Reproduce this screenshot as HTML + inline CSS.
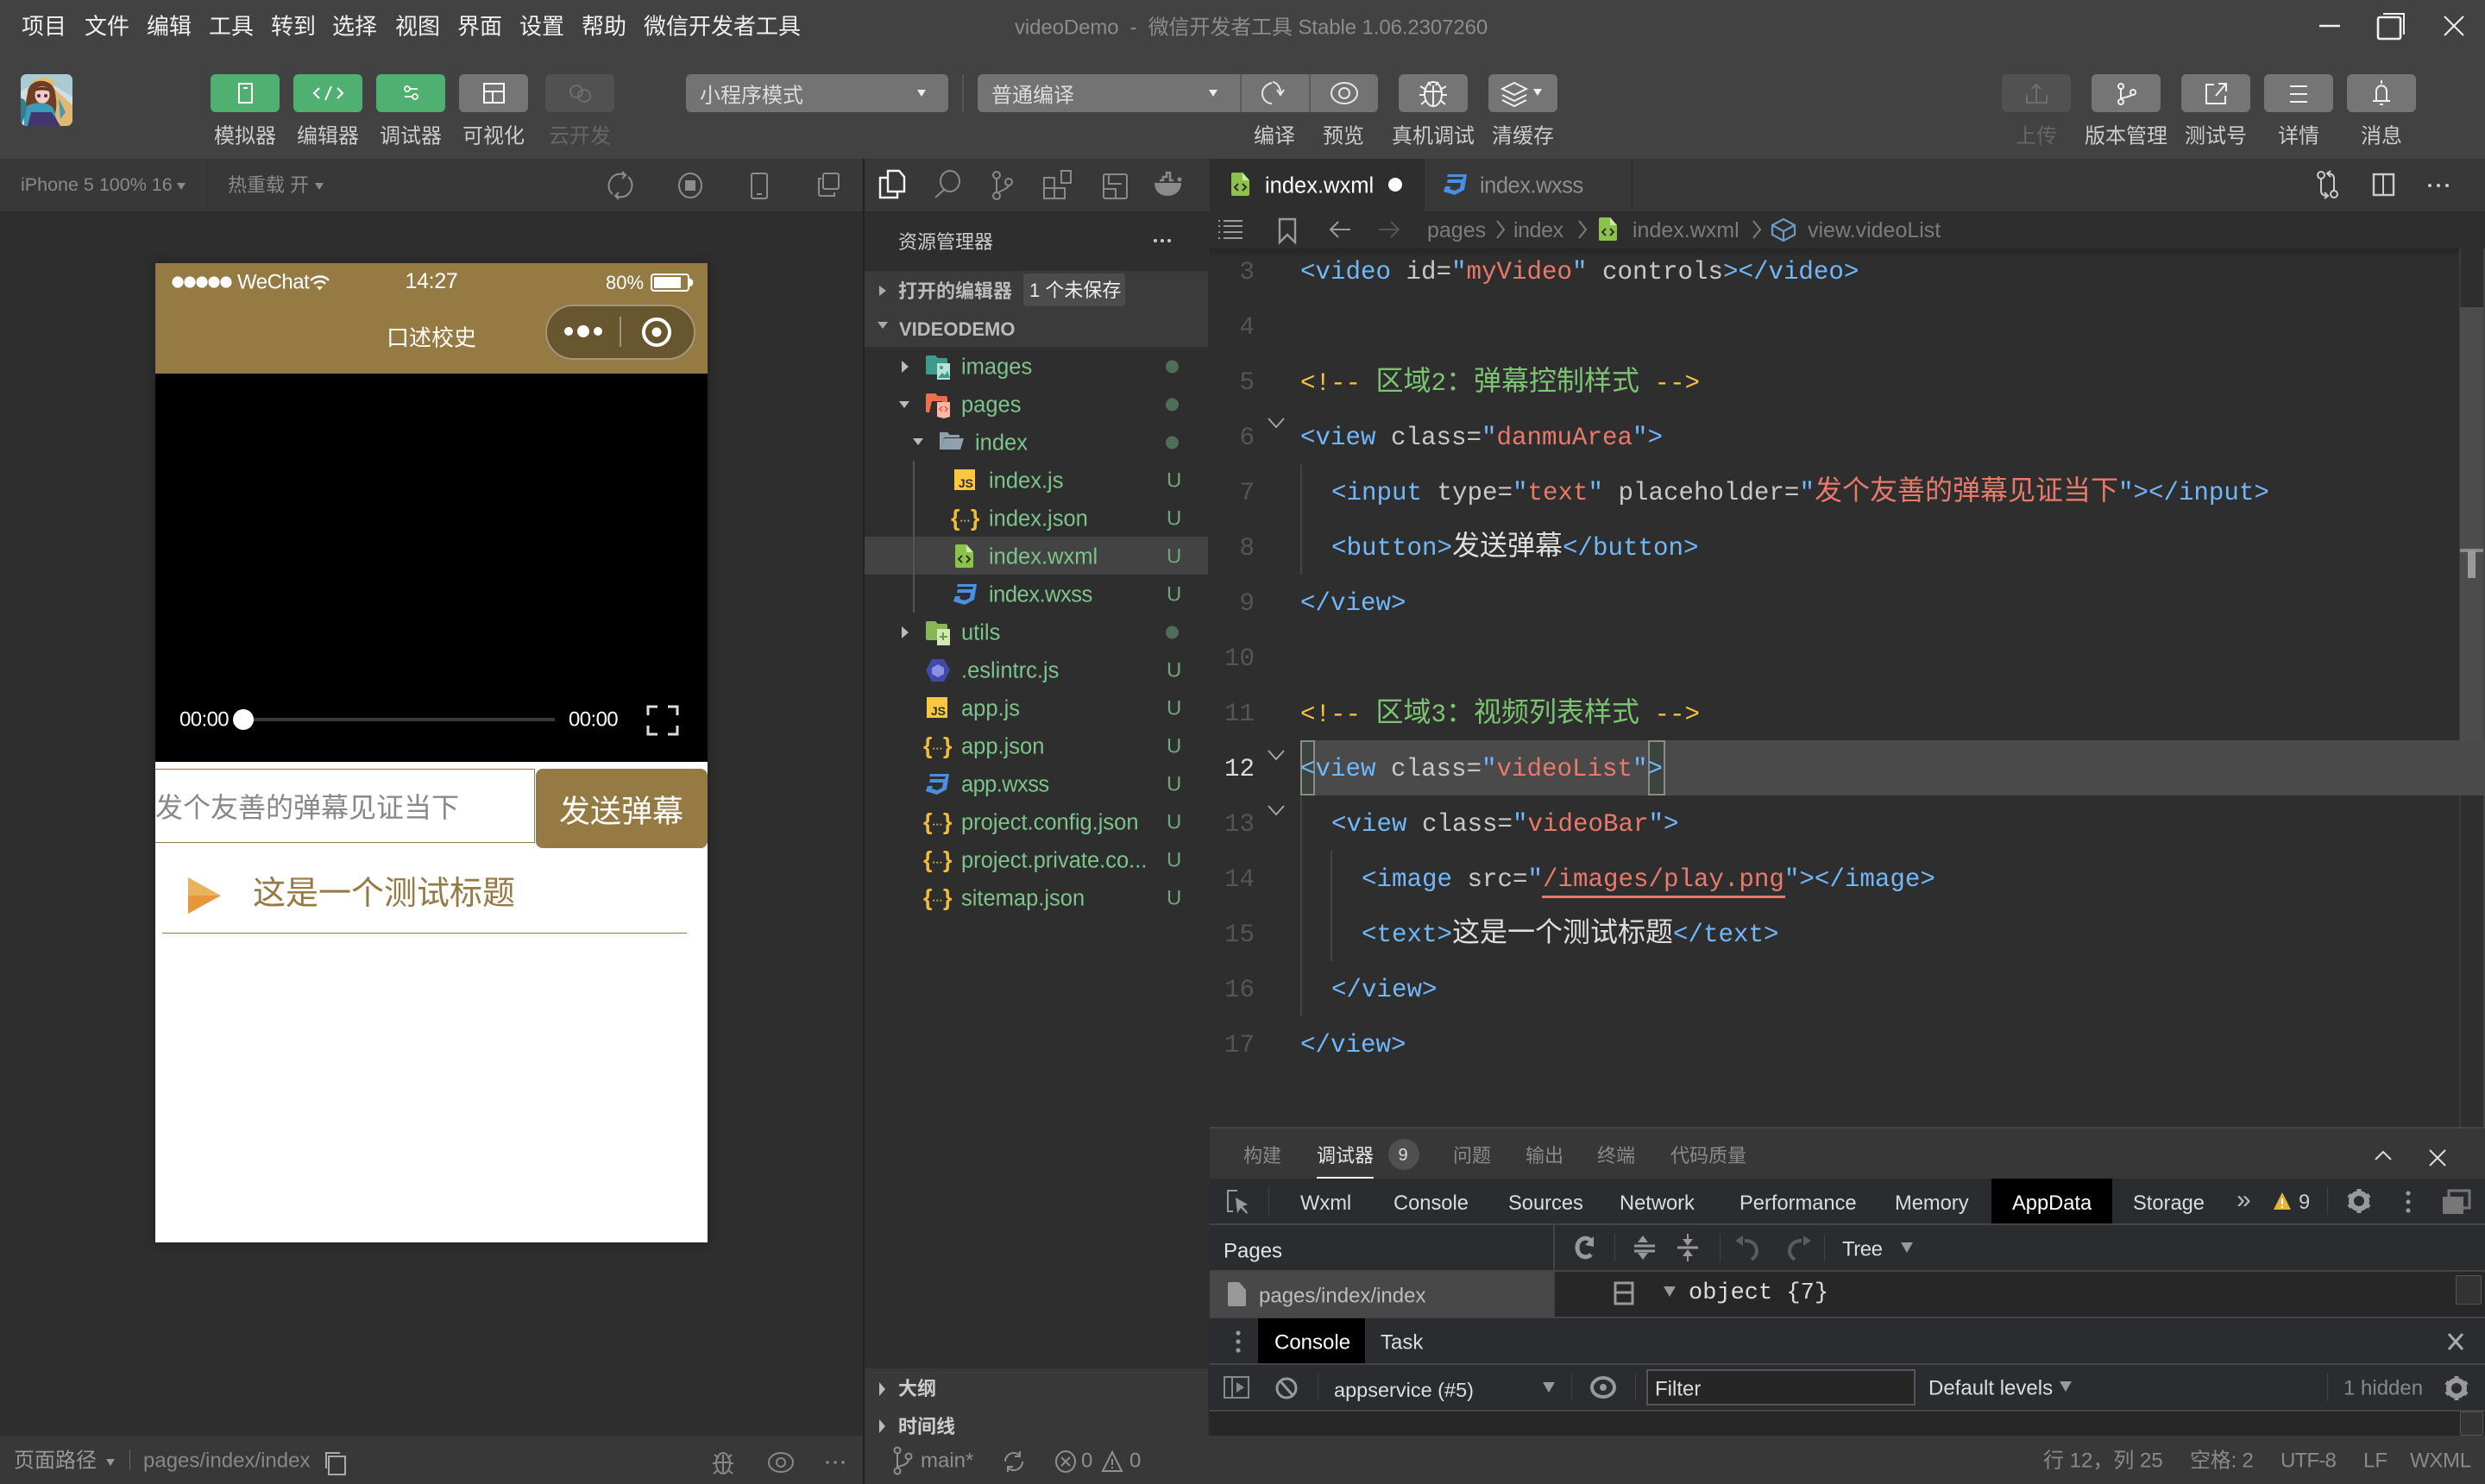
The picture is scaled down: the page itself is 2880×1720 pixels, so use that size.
<!DOCTYPE html>
<html lang="zh">
<head>
<meta charset="utf-8">
<title>videoDemo - 微信开发者工具</title>
<style>
html,body{margin:0;padding:0;width:2880px;height:1720px;overflow:hidden;background:#2e2e2e}
body{position:relative;font-family:"Liberation Sans","Noto Sans CJK SC",sans-serif;color:#ccc}
.a{position:absolute}
.t{position:absolute;white-space:nowrap;transform:translateY(calc(-50% + 2px));line-height:1.2}
.tc{position:absolute;white-space:nowrap;transform:translate(-50%,-50%);line-height:1.2}
svg{position:absolute;overflow:visible;fill:none}
.b{position:absolute;top:86px;width:80px;height:44px;border-radius:6px;background:#757575}
.g{background:#4fb072}
.d{background:#515151}
.lab{position:absolute;top:159px;transform:translate(-50%,-50%);font-size:24px;color:#ccc;white-space:nowrap;line-height:1.2}
.m{position:absolute;top:31px;transform:translateY(-50%);font-size:26px;color:#f0f0f0;white-space:nowrap;line-height:1.2}
.c{position:absolute;font-family:"Liberation Mono","Noto Sans CJK SC",monospace;font-size:29.17px;line-height:64px;height:64px;white-space:pre;color:#c8c8c8;transform:translateY(2px)}
.c i{font-style:normal;font-family:"Noto Sans CJK SC",sans-serif;font-size:32px;line-height:0}
.n{position:absolute;left:1394px;width:60px;text-align:right;font-family:"Liberation Mono",monospace;font-size:29.17px;line-height:64px;color:#555;transform:translateY(2px)}
.k{color:#70b8fa}.s{color:#e9796b}.y{color:#f5c542}.v{color:#7cc474}.w{color:#dedede}
.f{position:absolute;white-space:nowrap;transform:translateY(calc(-50% + 2px));font-size:25.5px;color:#7cc48b;line-height:1.2}
.u{position:absolute;left:1352px;transform:translateY(calc(-50% + 2px));font-size:24px;color:#6fa57c;line-height:1.2}
.dot{position:absolute;left:1351px;width:15px;height:15px;border-radius:50%;background:#4f6d58;transform:translateY(calc(-50% + 1px))}
.dt{position:absolute;font-size:23.7px;color:#dcdcdc;top:1395px;transform:translateY(-50%);white-space:nowrap;line-height:1.2}
.pt{position:absolute;font-size:22px;color:#8a8a8a;top:1340px;transform:translateY(-50%);white-space:nowrap;line-height:1.2}
.st{position:absolute;font-size:24px;color:#8a8a8a;top:1694px;transform:translateY(-50%);white-space:nowrap;line-height:1.2}
.br{position:absolute;top:267px;transform:translateY(-50%);font-size:25px;color:#7c7c7c;white-space:nowrap;line-height:1.2}
.js{position:absolute;width:24px;height:24px;background:#fbc740;color:#2e2e2e;font:bold 14px/14px "Liberation Sans",sans-serif;text-align:right;padding:9px 2px 0 0;box-sizing:border-box}
.jn{position:absolute;font:bold 27px/1 "Liberation Sans",sans-serif;color:#f2bb3a;transform:translateY(-50%);white-space:nowrap}
.jn b{font-size:12px;letter-spacing:.8px;position:relative;top:-5px}
</style>
</head>
<body>

<!-- header -->
<div class="a" style="left:0;top:0;width:2880px;height:184px;background:#424242"></div>
<div class="m" style="left:25px">项目</div>
<div class="m" style="left:98px">文件</div>
<div class="m" style="left:170px">编辑</div>
<div class="m" style="left:242px">工具</div>
<div class="m" style="left:314px">转到</div>
<div class="m" style="left:385px">选择</div>
<div class="m" style="left:458px">视图</div>
<div class="m" style="left:530px">界面</div>
<div class="m" style="left:602px">设置</div>
<div class="m" style="left:674px">帮助</div>
<div class="m" style="left:746px">微信开发者工具</div>
<div class="t" style="left:1176px;top:31px;font-size:24px;color:#8c8c8c;letter-spacing:-.1px">videoDemo&nbsp; - &nbsp;微信开发者工具 Stable 1.06.2307260</div>

<!-- window controls -->
<svg style="left:0;top:0" width="2880" height="60" stroke="#f0f0f0" stroke-width="2.4">
<path d="M2688 30h24"/>
<rect x="2756" y="20" width="26" height="25" rx="2" stroke-width="2.6"/>
<path d="M2762 16h24v24" stroke-width="2"/>
<path d="M2833 19l22 22M2855 19l-22 22" stroke-width="2"/>
</svg>

<!-- avatar -->
<svg style="left:24px;top:86px;border-radius:6px" width="60" height="60" viewBox="0 0 60 60">
<clipPath id="av"><rect width="60" height="60" rx="7"/></clipPath>
<g clip-path="url(#av)">
<rect width="60" height="60" fill="#cfe0e0"/>
<path d="M0 0h60v26L40 14 20 8 0 20z" fill="#a9ccd4"/>
<path d="M14 8c8-6 20-6 26 2l-6 6H18z" fill="#e3bd6a"/>
<path d="M38 16l22 20v24H36z" fill="#dfb874"/>
<path d="M8 22C8 4 38 2 40 22c2 12 2 20-2 28H10C4 40 6 30 8 22z" fill="#6e3f26"/>
<ellipse cx="25" cy="24" rx="8.500" ry="10" fill="#f0cdbd"/>
<path d="M16 20c3-7 15-7 18 0-5-2-13-2-18 0z" fill="#5f3520"/>
<circle cx="21" cy="25" r="2" fill="#4b2a50"/><circle cx="29" cy="25" r="2" fill="#4b2a50"/>
<path d="M4 60V40c6-8 28-10 34 0l6 20z" fill="#3f9ab8"/>
<path d="M12 44h24l10 16H8z" fill="#43366f"/>
<path d="M0 28c6 0 8 8 6 18L0 60z" fill="#2e7f92"/>
<path d="M44 28l8 16-6 8z" fill="#4a98b0"/>
</g>
</svg>

<!-- left toolbar buttons -->
<div class="b g" style="left:244px"><svg width="80" height="44" stroke="#fff" stroke-width="2"><rect x="33" y="11" width="15" height="22"/><path d="M38 16h5"/></svg></div>
<div class="b g" style="left:340px"><svg width="80" height="44" stroke="#fff" stroke-width="2"><path d="M30 16l-6 6 6 6M51 16l6 6-6 6M44 14l-7 16"/></svg></div>
<div class="b g" style="left:436px"><svg width="80" height="44" stroke="#fff" stroke-width="1.8"><circle cx="36" cy="17" r="3"/><path d="M39 17h9M33 26h9"/><circle cx="45" cy="26" r="3"/></svg></div>
<div class="b" style="left:532px"><svg width="80" height="44" stroke="#fff" stroke-width="2"><rect x="29" y="11" width="23" height="22"/><path d="M29 20h23M39 20v13"/></svg></div>
<div class="b d" style="left:632px"><svg width="80" height="44" stroke="#6e6e6e" stroke-width="2"><circle cx="36" cy="20" r="7"/><circle cx="45" cy="25" r="7"/></svg></div>
<div class="lab" style="left:284px">模拟器</div>
<div class="lab" style="left:380px">编辑器</div>
<div class="lab" style="left:476px">调试器</div>
<div class="lab" style="left:572px">可视化</div>
<div class="lab" style="left:672px;color:#666">云开发</div>

<!-- mode dropdowns -->
<div class="a" style="left:795px;top:86px;width:304px;height:44px;background:#737373;border-radius:6px"></div>
<div class="t" style="left:811px;top:110px;font-size:24px;color:#ddd">小程序模式</div>
<svg style="left:1062px;top:103px" width="12" height="10"><path d="M1 1h10L6 9z" fill="#eee"/></svg>
<div class="a" style="left:1115px;top:86px;width:2px;height:44px;background:#555"></div>
<div class="a" style="left:1133px;top:86px;width:464px;height:44px;background:#737373;border-radius:6px"></div>
<div class="a" style="left:1437px;top:86px;width:2px;height:44px;background:#5c5c5c"></div>
<div class="a" style="left:1517px;top:86px;width:2px;height:44px;background:#5c5c5c"></div>
<div class="t" style="left:1149px;top:110px;font-size:24px;color:#ddd">普通编译</div>
<svg style="left:1400px;top:103px" width="12" height="10"><path d="M1 1h10L6 9z" fill="#eee"/></svg>
<svg style="left:1450px;top:90px" width="60" height="36" stroke="#e6e6e6" stroke-width="2"><path d="M24 6c-7 2-11 7-11 12 0 7 5 12 11 12"/><path d="M25 5c6 1 9 7 9 13M30 14l4 6 4-6"/></svg>
<svg style="left:1530px;top:90px" width="60" height="36" stroke="#e6e6e6" stroke-width="2"><ellipse cx="28" cy="18" rx="15" ry="12"/><circle cx="28" cy="18" r="6"/></svg>
<div class="b" style="left:1621px"><svg width="80" height="44" stroke="#f0f0f0" stroke-width="2"><ellipse cx="40" cy="23" rx="10" ry="14"/><path d="M31 20h18M40 13v24M34 9l3 4M46 9l-3 4M25 14l7 4M55 14l-7 4M24 24h7M56 24h-7M26 35l6-5M54 35l-6-5"/></svg></div>
<div class="b" style="left:1725px"><svg width="80" height="44" stroke="#f0f0f0" stroke-width="2"><path d="M16 17l14-7 14 7-14 7zM16 24l14 7 14-7M16 30l14 7 14-7"/><path d="M52 17h10l-5 8z" fill="#f0f0f0" stroke="none"/></svg></div>
<div class="lab" style="left:1477px">编译</div>
<div class="lab" style="left:1557px">预览</div>
<div class="lab" style="left:1661px">真机调试</div>
<div class="lab" style="left:1765px">清缓存</div>

<!-- right toolbar -->
<div class="b d" style="left:2320px"><svg width="80" height="44" stroke="#6e6e6e" stroke-width="2"><path d="M40 12v21M35 17l5-5 5 5M29 24v9h23v-9"/></svg></div>
<div class="b" style="left:2424px"><svg width="80" height="44" stroke="#f0f0f0" stroke-width="2"><circle cx="34" cy="14" r="3"/><circle cx="34" cy="32" r="3"/><circle cx="48" cy="21" r="3"/><path d="M34 17v12M35 28c6-2 11-2 12-5"/></svg></div>
<div class="b" style="left:2528px"><svg width="80" height="44" stroke="#f0f0f0" stroke-width="2"><path d="M38 12h-9v22h22v-9M40 25l11-13M43 11h9v9"/></svg></div>
<div class="b" style="left:2624px"><svg width="80" height="44" stroke="#f0f0f0" stroke-width="2"><path d="M30 14h20M30 23h20M30 32h20"/></svg></div>
<div class="b" style="left:2720px"><svg width="80" height="44" stroke="#f0f0f0" stroke-width="2"><path d="M34 30V20c0-9 12-9 12 0v10M30 31h20M40 7v4M38 35h4"/></svg></div>
<div class="lab" style="left:2360px;color:#666">上传</div>
<div class="lab" style="left:2464px">版本管理</div>
<div class="lab" style="left:2568px">测试号</div>
<div class="lab" style="left:2664px">详情</div>
<div class="lab" style="left:2760px">消息</div>

<!-- secondary bar -->
<div class="a" style="left:0;top:184px;width:2880px;height:61px;background:#383838"></div>
<div class="a" style="left:240px;top:184px;width:1px;height:61px;background:#333"></div>
<div class="a" style="left:398px;top:184px;width:1px;height:61px;background:#333"></div>
<div class="t" style="left:24px;top:213px;font-size:21.5px;color:#8a8a8a">iPhone 5 100% 16</div>
<svg style="left:204px;top:211px" width="12" height="10"><path d="M1 1h10L6 9z" fill="#8a8a8a"/></svg>
<div class="t" style="left:264px;top:213px;font-size:22px;color:#8a8a8a">热重载 开</div>
<svg style="left:364px;top:211px" width="12" height="10"><path d="M1 1h10L6 9z" fill="#8a8a8a"/></svg>
<svg style="left:700px;top:197px" width="280" height="36" stroke="#8c8c8c" stroke-width="2">
<path d="M10 28c-6-5-6-14 0-20 4-4 10-4 14-2M28 8c6 5 6 14 0 20-4 4-10 4-14 2M21 2l4 4-4 4M17 34l-4-4 4-4"/>
<ellipse cx="100" cy="18" rx="13" ry="14"/><rect x="94" y="12" width="12" height="12" fill="#8c8c8c" stroke="none"/>
<rect x="171" y="4" width="18" height="29" rx="2"/><path d="M177 28h6"/>
<rect x="254" y="4" width="18" height="18" rx="2"/><path d="M252 10h-3v18a2 2 0 0 0 2 2h16v-4"/>
</svg>

<!-- simulator -->
<div class="a" style="left:0;top:245px;width:1000px;height:1419px;background:#2e2e2e"></div>
<div class="a" style="left:180px;top:305px;width:640px;height:1135px;background:#fff;box-shadow:0 0 12px rgba(0,0,0,.35)"></div>
<div class="a" style="left:180px;top:305px;width:640px;height:128px;background:#957a44"></div>
<svg style="left:198px;top:320px" width="72" height="14"><circle cx="8" cy="7" r="6.600" fill="#fff"/><circle cx="22" cy="7" r="6.600" fill="#fff"/><circle cx="36" cy="7" r="6.600" fill="#fff"/><circle cx="50" cy="7" r="6.600" fill="#fff"/><circle cx="64" cy="7" r="6.600" fill="#fff"/></svg>
<div class="t" style="left:275px;top:326px;font-size:24px;color:#fff;letter-spacing:-.5px">WeChat</div>
<svg style="left:358px;top:318px" width="24" height="20" stroke="#fff" stroke-width="2.4"><path d="M2 7c6-6 16-6 21 0M6 11c4-4 10-4 13 0"/><path d="M9 14h7l-3.500 4.500z" fill="#fff" stroke="none"/></svg>
<div class="tc" style="left:500px;top:326px;font-size:25px;color:#fff;letter-spacing:-.3px">14:27</div>
<div class="t" style="left:702px;top:326px;font-size:22px;color:#fff">80%</div>
<svg style="left:754px;top:317px" width="50" height="22" stroke="#fff" stroke-width="2"><rect x="1" y="1" width="43" height="19" rx="3"/><rect x="4" y="4" width="31" height="13" fill="#fff" stroke="none"/><path d="M46 7c3 1 3 6 0 7z" fill="#fff"/></svg>
<div class="tc" style="left:500px;top:392px;font-size:26px;color:#fff">口述校史</div>
<div class="a" style="left:632px;top:353px;width:174px;height:64px;box-sizing:border-box;border-radius:32px;background:#68562f;border:2px solid #a4967a"></div>
<svg style="left:632px;top:353px" width="174" height="64"><ellipse cx="27" cy="31" rx="5" ry="5" fill="#fff"/><ellipse cx="44" cy="31" rx="7" ry="7" fill="#fff"/><ellipse cx="61" cy="31" rx="5" ry="5" fill="#fff"/><path d="M87 14v35" stroke="#9e927a" stroke-width="2"/><circle cx="129" cy="32" r="15" stroke="#fff" stroke-width="4"/><circle cx="129" cy="32" r="5.500" fill="#fff"/></svg>

<div class="a" style="left:180px;top:433px;width:640px;height:450px;background:#000"></div>
<div class="t" style="left:208px;top:833px;font-size:24px;color:#fff;letter-spacing:-.6px">00:00</div>
<div class="a" style="left:282px;top:832px;width:361px;height:4px;background:#3a3a3a"></div>
<div class="a" style="left:270px;top:822px;width:24px;height:24px;border-radius:50%;background:#fff"></div>
<div class="t" style="left:659px;top:833px;font-size:24px;color:#fff;letter-spacing:-.6px">00:00</div>
<svg style="left:750px;top:817px" width="36" height="36" stroke="#ddd" stroke-width="3"><path d="M1 12V2h11M24 2h11v10M1 24v10h11M24 34h11V24"/></svg>

<div class="a" style="left:180px;top:891px;width:440px;height:86px;box-sizing:border-box;border:1px solid #957a44;border-left:0;background:#fff"></div>
<div class="t" style="left:180px;top:934px;font-size:32px;color:#888">发个友善的弹幕见证当下</div>
<div class="a" style="left:621px;top:891px;width:199px;height:92px;background:#957a44;border-radius:8px"></div>
<div class="tc" style="left:720px;top:940px;font-size:36px;color:#fff">发送弹幕</div>
<svg style="left:216px;top:1015px" width="42" height="46"><path d="M2 2L40 23H2z" fill="#eab25c"/><path d="M2 23h38L2 44z" fill="#e8963e"/></svg>
<div class="t" style="left:293px;top:1035px;font-size:38px;color:#957a44">这是一个测试标题</div>
<div class="a" style="left:188px;top:1081px;width:608px;height:1px;background:#957a44"></div>

<!-- sidebar -->
<div class="a" style="left:1000px;top:184px;width:2px;height:1536px;background:#222"></div>
<div class="a" style="left:1002px;top:245px;width:398px;height:1419px;background:#2e2e2e"></div>
<svg style="left:1002px;top:190px" width="400" height="50" stroke="#8a8a8a" stroke-width="2">
<g stroke="#f4f4f4" stroke-width="2.400"><path d="M27 8h13l6 7v17H27z"/><path d="M27 16h-9v23h20v-7"/></g>
<ellipse cx="99" cy="20" rx="11" ry="12"/><path d="M92 30L82 39"/>
<circle cx="153" cy="13" r="4"/><circle cx="153" cy="37" r="4"/><circle cx="167" cy="21" r="4"/><path d="M153 17v16M155 33c6-3 11-5 12-8"/>
<path d="M208 16h12v12h-12zM208 28v12h12V28M220 28h12v12h-12"/><rect x="228" y="8" width="11" height="14"/>
<rect x="277" y="12" width="27" height="28" rx="2"/><path d="M283 12v11h15M277 29h14v11"/>
<path d="M336 22h31c0 9-7 15-16 15s-15-6-15-15z" fill="#8a8a8a" stroke="none"/><path d="M342 19h4v-4h4v-5h4v9h4" stroke-width="2.500"/><circle cx="365" cy="18" r="2.500" fill="#8a8a8a" stroke="none"/>
</svg>
<div class="t" style="left:1041px;top:279px;font-size:22px;color:#ccc">资源管理器</div>
<svg style="left:1336px;top:276px" width="24" height="6"><circle cx="3" cy="3" r="2" fill="#ccc"/><circle cx="11" cy="3" r="2" fill="#ccc"/><circle cx="19" cy="3" r="2" fill="#ccc"/></svg>

<div class="a" style="left:1002px;top:314px;width:398px;height:88px;background:#3b3b3b"></div>
<svg style="left:1016px;top:329px" width="50" height="60"><path d="M3 2l8 6-8 6z" fill="#aaa"/><path d="M1 44h12l-6 8z" fill="#aaa"/></svg>
<div class="t" style="left:1041px;top:336px;font-size:22px;font-weight:bold;color:#bbb">打开的编辑器</div>
<div class="a" style="left:1186px;top:317px;width:118px;height:38px;background:#4c4c4c;border-radius:4px"></div>
<div class="t" style="left:1193px;top:335px;font-size:22px;color:#eee">1 个未保存</div>
<div class="t" style="left:1042px;top:380px;font-size:22px;font-weight:bold;color:#bbb">VIDEODEMO</div>

<div class="a" style="left:1002px;top:622px;width:398px;height:44px;background:#434343"></div>
<div class="a" style="left:1058px;top:534px;width:2px;height:176px;background:#555"></div>

<!-- tree arrows -->
<svg style="left:1040px;top:410px" width="40" height="340">
<path d="M5 8l8 7-8 7z" fill="#bbb"/>
<path d="M2 55h12l-6 8z" fill="#bbb"/>
<path d="M18 98h12l-6 8z" fill="#bbb"/>
<path d="M5 316l8 7-8 7z" fill="#bbb"/>
</svg>

<!-- folder icons -->
<svg style="left:1072px;top:410px" width="34" height="32"><path d="M1 4a2 2 0 0 1 2-2h9l3 3h9a2 2 0 0 1 2 2v17H3a2 2 0 0 1-2-2z" fill="#3e9a8a"/><rect x="14" y="11" width="15" height="19" fill="#b7e3d7"/><circle cx="19" cy="16" r="2" fill="#3e9a8a"/><path d="M15 28l5-6 3 3 3-5 3 8z" fill="#3e9a8a"/></svg>
<svg style="left:1072px;top:454px" width="34" height="32"><path d="M1 4a2 2 0 0 1 2-2h9l3 3h9a2 2 0 0 1 2 2v17H3a2 2 0 0 1-2-2z" fill="#e9704a"/><path d="M5 24l3-13h12v13z" fill="#3a2c28"/><path d="M14 12h15v17l-7 2-8-2z" fill="#f9b8a4"/><path d="M20 17l-3 3 3 3M23 17l3 3-3 3" stroke="#e9504a" stroke-width="1.500"/></svg>
<svg style="left:1088px;top:498px" width="30" height="30"><path d="M1 3h9l3 3h11v3H6L3 23H1z" fill="#8fa1ae"/><path d="M6 10h23l-4 13H3z" fill="#8fa1ae"/></svg>
<svg style="left:1072px;top:718px" width="34" height="32"><path d="M1 4a2 2 0 0 1 2-2h9l3 3h9a2 2 0 0 1 2 2v17H3a2 2 0 0 1-2-2z" fill="#8ab554"/><rect x="14" y="11" width="15" height="19" fill="#d3e8b4"/><path d="M21 15v9M17 20h9" stroke="#6a9a3a" stroke-width="2"/></svg>
<svg style="left:1072px;top:763px" width="30" height="28"><path d="M8 1h14l7 13-7 13H8L1 14z" fill="#4249a8"/><path d="M15 7l7 4v7l-7 4-7-4v-7z" fill="#8a90e8"/></svg>

<!-- file icons -->
<div class="js" style="left:1106px;top:544px">JS</div>
<div class="js" style="left:1074px;top:808px">JS</div>
<div class="jn" style="left:1102px;top:601px">{<b>...</b>}</div>
<div class="jn" style="left:1070px;top:865px">{<b>...</b>}</div>
<div class="jn" style="left:1070px;top:953px">{<b>...</b>}</div>
<div class="jn" style="left:1070px;top:997px">{<b>...</b>}</div>
<div class="jn" style="left:1070px;top:1041px">{<b>...</b>}</div>
<svg style="left:1107px;top:631px" width="22" height="27"><path d="M2 0h11l8 9v16a2 2 0 0 1-2 2H2a2 2 0 0 1-2-2V2a2 2 0 0 1 2-2z" fill="#8bc34a"/><path d="M13 0l8 9h-8z" fill="#cfe8a8"/><path d="M8 13l-4 4 4 4M13 13l4 4-4 4" stroke="#2e2e2e" stroke-width="2"/></svg>
<svg style="left:1105px;top:676px" width="27" height="26"><path d="M5 1h22l-3 18-11 6-13-4 2-6h6l-1 3 6 2 6-3 1-6H4l1-4h17l1-3H4z" fill="#4a90e2"/></svg>
<svg style="left:1073px;top:896px" width="27" height="26"><path d="M5 1h22l-3 18-11 6-13-4 2-6h6l-1 3 6 2 6-3 1-6H4l1-4h17l1-3H4z" fill="#4a90e2"/></svg>

<!-- file labels -->
<div class="f" style="left:1114px;top:424px">images</div>
<div class="f" style="left:1114px;top:468px">pages</div>
<div class="f" style="left:1130px;top:512px">index</div>
<div class="f" style="left:1146px;top:556px">index.js</div>
<div class="f" style="left:1146px;top:600px">index.json</div>
<div class="f" style="left:1146px;top:644px">index.wxml</div>
<div class="f" style="left:1146px;top:688px;letter-spacing:-.5px">index.wxss</div>
<div class="f" style="left:1114px;top:732px">utils</div>
<div class="f" style="left:1114px;top:776px">.eslintrc.js</div>
<div class="f" style="left:1114px;top:820px">app.js</div>
<div class="f" style="left:1114px;top:864px">app.json</div>
<div class="f" style="left:1114px;top:908px;letter-spacing:-.6px">app.wxss</div>
<div class="f" style="left:1114px;top:952px">project.config.json</div>
<div class="f" style="left:1114px;top:996px">project.private.co...</div>
<div class="f" style="left:1114px;top:1040px">sitemap.json</div>
<div class="dot" style="top:424px"></div>
<div class="dot" style="top:468px"></div>
<div class="dot" style="top:512px"></div>
<div class="dot" style="top:732px"></div>
<div class="u" style="top:556px">U</div><div class="u" style="top:600px">U</div><div class="u" style="top:644px">U</div><div class="u" style="top:688px">U</div>
<div class="u" style="top:776px">U</div><div class="u" style="top:820px">U</div><div class="u" style="top:864px">U</div><div class="u" style="top:908px">U</div>
<div class="u" style="top:952px">U</div><div class="u" style="top:996px">U</div><div class="u" style="top:1040px">U</div>

<div class="a" style="left:1002px;top:1586px;width:398px;height:78px;background:#393939"></div>
<svg style="left:1016px;top:1600px" width="14" height="64"><path d="M3 2l7 8-7 8z" fill="#bbb"/><path d="M3 45l7 8-7 8z" fill="#bbb"/></svg>
<div class="t" style="left:1041px;top:1608px;font-size:22px;font-weight:bold;color:#ccc">大纲</div>
<div class="t" style="left:1041px;top:1652px;font-size:22px;font-weight:bold;color:#ccc">时间线</div>

<!-- editor tabs -->
<div class="a" style="left:1402px;top:184px;width:248px;height:61px;background:#2e2e2e"></div>
<div class="a" style="left:1650px;top:184px;width:1px;height:61px;background:#2a2a2a"></div>
<div class="a" style="left:1891px;top:184px;width:1px;height:61px;background:#2a2a2a"></div>
<svg style="left:1427px;top:200px" width="22" height="27"><path d="M2 0h11l8 9v16a2 2 0 0 1-2 2H2a2 2 0 0 1-2-2V2a2 2 0 0 1 2-2z" fill="#8bc34a"/><path d="M13 0l8 9h-8z" fill="#cfe8a8"/><path d="M8 13l-4 4 4 4M13 13l4 4-4 4" stroke="#2e2e2e" stroke-width="2"/></svg>
<div class="t" style="left:1466px;top:214px;font-size:25.5px;color:#fff">index.wxml</div>
<div class="a" style="left:1609px;top:206px;width:16px;height:16px;border-radius:50%;background:#fff"></div>
<svg style="left:1673px;top:201px" width="27" height="26"><path d="M5 1h22l-3 18-11 6-13-4 2-6h6l-1 3 6 2 6-3 1-6H4l1-4h17l1-3H4z" fill="#4a90e2"/></svg>
<div class="t" style="left:1715px;top:214px;font-size:25.5px;color:#8f8f8f;letter-spacing:-.5px">index.wxss</div>
<svg style="left:2670px;top:196px" width="190" height="36" stroke="#ccc" stroke-width="2">
<circle cx="20" cy="7" r="4"/><circle cx="35" cy="29" r="4"/><path d="M20 11v14c0 5 4 6 8 6M35 25V11c0-5-4-6-8-6M31 2l-4 3 4 4M24 27l4 4-4 3"/>
<rect x="81" y="6" width="23" height="24" stroke-width="2.400"/><path d="M92 6v24"/>
<circle cx="146" cy="19" r="2" fill="#ccc" stroke="none"/><circle cx="156" cy="19" r="2" fill="#ccc" stroke="none"/><circle cx="166" cy="19" r="2" fill="#ccc" stroke="none"/>
</svg>

<!-- breadcrumb -->
<div class="a" style="left:1402px;top:245px;width:1478px;height:43px;background:#2e2e2e"></div>
<svg style="left:1410px;top:250px" width="240" height="36" stroke="#9a9a9a" stroke-width="2">
<path d="M8 6h22M8 12h22M8 19h22M8 26h22M2 6h2M2 12h2M2 19h2M2 26h2"/>
<path d="M73 4h18v27l-9-9-9 9z" stroke-width="2.400"/>
<path d="M155 16h-22M141 7l-9 9 9 9"/>
<path d="M188 16h22M202 7l9 9-9 9" stroke="#555"/>
</svg>
<div class="br" style="left:1654px">pages</div>
<svg style="left:1733px;top:254px" width="12" height="24" stroke="#7c7c7c" stroke-width="2"><path d="M2 2l8 10-8 10"/></svg>
<div class="br" style="left:1754px;letter-spacing:-.4px">index</div>
<svg style="left:1828px;top:254px" width="12" height="24" stroke="#7c7c7c" stroke-width="2"><path d="M2 2l8 10-8 10"/></svg>
<svg style="left:1853px;top:252px" width="22" height="27"><path d="M2 0h11l8 9v16a2 2 0 0 1-2 2H2a2 2 0 0 1-2-2V2a2 2 0 0 1 2-2z" fill="#8bc34a"/><path d="M13 0l8 9h-8z" fill="#cfe8a8"/><path d="M8 13l-4 4 4 4M13 13l4 4-4 4" stroke="#2e2e2e" stroke-width="2"/></svg>
<div class="br" style="left:1892px">index.wxml</div>
<svg style="left:2030px;top:254px" width="12" height="24" stroke="#7c7c7c" stroke-width="2"><path d="M2 2l8 10-8 10"/></svg>
<svg style="left:2052px;top:252px" width="30" height="28" stroke="#6a9cc9" stroke-width="2.200"><path d="M15 2l13 7v11l-13 7-13-7V9zM2 9l13 7 13-7M15 16v11"/></svg>
<div class="br" style="left:2095px">view.videoList</div>
<div class="a" style="left:1402px;top:288px;width:1448px;height:10px;background:linear-gradient(#242424,#2e2e2e)"></div>

<!-- scrollbar -->
<div class="a" style="left:2850px;top:288px;width:28px;height:1018px;background:#2e2e2e;border-left:2px solid #3c3c3c;box-sizing:border-box"></div>
<div class="a" style="left:2851px;top:356px;width:29px;height:506px;background:#4c4c4c"></div>
<div class="a" style="left:2878px;top:288px;width:2px;height:1018px;background:#444"></div>
<div class="a" style="left:2851px;top:636px;width:27px;height:4px;background:#8a8a8a"></div>
<div class="a" style="left:2860px;top:638px;width:9px;height:32px;background:#999"></div>

<!-- editor -->
<div class="a" style="left:1507px;top:858px;width:1373px;height:64px;background:#4a4a4a"></div>
<div class="a" style="left:1507px;top:858px;width:17px;height:64px;box-sizing:border-box;border:2px solid #8a8a8a;background:#3c443e"></div>
<div class="a" style="left:1910px;top:858px;width:20px;height:64px;box-sizing:border-box;border:2px solid #8a8a8a;background:#3c443e"></div>

<div class="a" style="left:1507px;top:538px;width:2px;height:128px;background:#444"></div>
<div class="a" style="left:1507px;top:922px;width:2px;height:256px;background:#444"></div>
<div class="a" style="left:1542px;top:986px;width:2px;height:128px;background:#444"></div>

<div class="n" style="top:282px">3</div>
<div class="n" style="top:346px">4</div>
<div class="n" style="top:410px">5</div>
<div class="n" style="top:474px">6</div>
<div class="n" style="top:538px">7</div>
<div class="n" style="top:602px">8</div>
<div class="n" style="top:666px">9</div>
<div class="n" style="top:730px">10</div>
<div class="n" style="top:794px">11</div>
<div class="n" style="top:858px;color:#ddd">12</div>
<div class="n" style="top:922px">13</div>
<div class="n" style="top:986px">14</div>
<div class="n" style="top:1050px">15</div>
<div class="n" style="top:1114px">16</div>
<div class="n" style="top:1178px">17</div>

<svg style="left:1468px;top:480px" width="24" height="470" stroke="#aaa" stroke-width="1.800"><path d="M2 5l9 10 9-10M2 390l9 10 9-10M2 454l9 10 9-10"/></svg>

<div class="c" style="left:1507px;top:282px"><span class="k">&lt;video</span> id=<span class="k">"</span><span class="s">myVideo</span><span class="k">"</span> controls<span class="k">&gt;&lt;/video&gt;</span></div>
<div class="c" style="left:1507px;top:411px"><span class="y">&lt;!-- </span><span class="v"><i>区域</i>2<i>：弹幕控制样式</i> </span><span class="y">--&gt;</span></div>
<div class="c" style="left:1507px;top:474px"><span class="k">&lt;view</span> class=<span class="k">"</span><span class="s">danmuArea</span><span class="k">"&gt;</span></div>
<div class="c" style="left:1543px;top:538px"><span class="k">&lt;input</span> type=<span class="k">"</span><span class="s">text</span><span class="k">"</span> placeholder=<span class="k">"</span><span class="s"><i>发个友善的弹幕见证当下</i></span><span class="k">"&gt;&lt;/input&gt;</span></div>
<div class="c" style="left:1543px;top:602px"><span class="k">&lt;button&gt;</span><span class="w"><i>发送弹幕</i></span><span class="k">&lt;/button&gt;</span></div>
<div class="c" style="left:1507px;top:666px"><span class="k">&lt;/view&gt;</span></div>
<div class="c" style="left:1507px;top:795px"><span class="y">&lt;!-- </span><span class="v"><i>区域</i>3<i>：视频列表样式</i> </span><span class="y">--&gt;</span></div>
<div class="c" style="left:1507px;top:858px"><span class="k">&lt;view</span> class=<span class="k">"</span><span class="s">videoList</span><span class="k">"&gt;</span></div>
<div class="c" style="left:1543px;top:922px"><span class="k">&lt;view</span> class=<span class="k">"</span><span class="s">videoBar</span><span class="k">"&gt;</span></div>
<div class="c" style="left:1578px;top:986px"><span class="k">&lt;image</span> src=<span class="k">"</span><span class="s">/images/play.png</span><span class="k">"&gt;&lt;/image&gt;</span></div>
<div class="a" style="left:1787px;top:1038px;width:282px;height:3px;background:#e9796b"></div>
<div class="c" style="left:1578px;top:1050px"><span class="k">&lt;text&gt;</span><span class="w"><i>这是一个测试标题</i></span><span class="k">&lt;/text&gt;</span></div>
<div class="c" style="left:1543px;top:1114px"><span class="k">&lt;/view&gt;</span></div>
<div class="c" style="left:1507px;top:1178px"><span class="k">&lt;/view&gt;</span></div>

<!-- panel -->
<div class="a" style="left:1402px;top:1306px;width:1478px;height:2px;background:#444"></div>
<div class="a" style="left:1402px;top:1308px;width:1478px;height:58px;background:#373737"></div>
<div class="pt" style="left:1441px">构建</div>
<div class="pt" style="left:1526px;color:#e4e4e4">调试器</div>
<div class="a" style="left:1526px;top:1364px;width:66px;height:2px;background:#eee"></div>
<div class="a" style="left:1609px;top:1320px;width:36px;height:36px;border-radius:50%;background:#505050"></div>
<div class="tc" style="left:1626px;top:1339px;font-size:20px;color:#ddd">9</div>
<div class="pt" style="left:1684px">问题</div>
<div class="pt" style="left:1768px">输出</div>
<div class="pt" style="left:1851px">终端</div>
<div class="pt" style="left:1936px">代码质量</div>
<svg style="left:2750px;top:1330px" width="90" height="24" stroke="#ddd" stroke-width="2"><path d="M3 14l9-9 9 9M66 3l18 18M84 3L66 21"/></svg>

<div class="a" style="left:1402px;top:1366px;width:1478px;height:52px;background:#2a2c30"></div>
<div class="a" style="left:1402px;top:1418px;width:1478px;height:2px;background:#444"></div>
<svg style="left:1420px;top:1378px" width="36" height="30" stroke="#999" stroke-width="2"><path d="M14 2H3v24h6"/><path d="M12 10l2 18 4-6 7 7 1-2-6-7 6-2z" fill="#999" stroke="none"/></svg>
<div class="a" style="left:1470px;top:1376px;width:1px;height:32px;background:#444"></div>
<div class="dt" style="left:1507px">Wxml</div>
<div class="dt" style="left:1615px">Console</div>
<div class="dt" style="left:1748px">Sources</div>
<div class="dt" style="left:1877px">Network</div>
<div class="dt" style="left:2016px">Performance</div>
<div class="dt" style="left:2196px">Memory</div>
<div class="a" style="left:2308px;top:1366px;width:140px;height:52px;background:#000"></div>
<div class="dt" style="left:2332px;color:#fff">AppData</div>
<div class="dt" style="left:2472px">Storage</div>
<div class="dt" style="left:2592px;top:1391px;color:#bbb;font-size:30px">»</div>
<svg style="left:2634px;top:1381px" width="22" height="22"><path d="M11 1l10 20H1z" fill="#e6b43a"/><path d="M11 8v7M11 17v2" stroke="#fff" stroke-width="2"/></svg>
<div class="dt" style="left:2664px;top:1394px;color:#ccc">9</div>
<div class="a" style="left:2697px;top:1376px;width:1px;height:32px;background:#444"></div>
<svg style="left:2720px;top:1378px" width="30" height="30"><circle cx="14" cy="14" r="9" stroke="#999" stroke-width="6"/><path d="M14 0v5M14 23v5M2 7l4 3M22 18l4 3M2 21l4-3M22 10l4-3" stroke="#999" stroke-width="5"/></svg>
<svg style="left:2787px;top:1378px" width="8" height="30"><circle cx="4" cy="5" r="2.600" fill="#999"/><circle cx="4" cy="15" r="2.600" fill="#999"/><circle cx="4" cy="25" r="2.600" fill="#999"/></svg>
<svg style="left:2830px;top:1378px" width="34" height="30"><rect x="8" y="2" width="24" height="20" fill="none" stroke="#777" stroke-width="3"/><rect x="1" y="9" width="24" height="20" fill="#777"/></svg>

<div class="a" style="left:1402px;top:1420px;width:1478px;height:52px;background:#2a2c30"></div>
<div class="a" style="left:1402px;top:1472px;width:1478px;height:2px;background:#444"></div>
<div class="t" style="left:1418px;top:1449px;font-size:24px;color:#e4e4e4">Pages</div>
<div class="a" style="left:1800px;top:1420px;width:2px;height:108px;background:#444"></div>
<div class="a" style="left:1402px;top:1474px;width:398px;height:52px;background:#484848"></div>
<svg style="left:1423px;top:1486px" width="22" height="28"><path d="M2 0h11l8 9v17a2 2 0 0 1-2 2H2a2 2 0 0 1-2-2V2a2 2 0 0 1 2-2z" fill="#999"/></svg>
<div class="t" style="left:1459px;top:1501px;font-size:24px;color:#bdbdbd">pages/index/index</div>
<div class="a" style="left:1802px;top:1474px;width:1078px;height:52px;background:#272727"></div>
<svg style="left:1820px;top:1428px" width="400" height="36" stroke="#999" stroke-width="2">
<path d="M24 10c-6-6-16-2-16 8s10 14 16 8" stroke-width="5"/><path d="M27 5v12l-10-2z" fill="#999" stroke="none"/>
<path d="M84 4l6 8h-12zM84 32l6-8h-12z" fill="#999" stroke="none"/>
<path d="M74 16h24M74 22h24" stroke-width="3"/>
<path d="M136 2v11M136 34V23" stroke-width="2"/><path d="M136 16l-6-8h12zM136 20l-6 8h12z" fill="#999" stroke="none"/>
<path d="M124 18h24" stroke-width="3"/>
<g stroke="#5c5c5c" stroke-width="4"><path d="M202 10c10 0 14 6 14 12s-4 8-6 10"/><path d="M268 10c-10 0-14 6-14 12s4 8 6 10"/></g>
<path d="M200 4v12l-9-6z" fill="#5c5c5c" stroke="none"/><path d="M270 4v12l9-6z" fill="#5c5c5c" stroke="none"/>
</svg>
<div class="a" style="left:1871px;top:1430px;width:1px;height:32px;background:#444"></div>
<div class="a" style="left:1993px;top:1430px;width:1px;height:32px;background:#444"></div>
<div class="a" style="left:2114px;top:1430px;width:1px;height:32px;background:#444"></div>
<div class="t" style="left:2135px;top:1447px;font-size:24px;color:#ddd;letter-spacing:-.5px">Tree</div>
<svg style="left:2203px;top:1440px" width="14" height="12"><path d="M0 0h14L7 12z" fill="#999"/></svg>
<svg style="left:1870px;top:1484px" width="24" height="30" stroke="#999" stroke-width="3"><rect x="2" y="3" width="20" height="24"/><path d="M2 14h20"/></svg>
<svg style="left:1928px;top:1491px" width="14" height="12"><path d="M0 0h14L7 12z" fill="#999"/></svg>
<div class="t" style="left:1957px;top:1497px;font:27px/1.2 'Liberation Mono',monospace;color:#ddd">object {7}</div>
<div class="a" style="left:2846px;top:1478px;width:30px;height:34px;background:#333;border:1px solid #555;box-sizing:border-box;border-radius:2px"></div>

<div class="a" style="left:1402px;top:1526px;width:1478px;height:2px;background:#444"></div>
<div class="a" style="left:1402px;top:1528px;width:1478px;height:52px;background:#2a2c30"></div>
<svg style="left:1431px;top:1540px" width="8" height="30"><circle cx="4" cy="5" r="2.600" fill="#999"/><circle cx="4" cy="15" r="2.600" fill="#999"/><circle cx="4" cy="25" r="2.600" fill="#999"/></svg>
<div class="a" style="left:1458px;top:1528px;width:124px;height:52px;background:#000"></div>
<div class="t" style="left:1477px;top:1555px;font-size:24px;color:#fff">Console</div>
<div class="t" style="left:1600px;top:1555px;font-size:24px;color:#ddd">Task</div>
<svg style="left:2836px;top:1545px" width="20" height="20" stroke="#aaa" stroke-width="3"><path d="M2 1l16 18M18 1L2 19"/></svg>

<div class="a" style="left:1402px;top:1580px;width:1478px;height:2px;background:#444"></div>
<div class="a" style="left:1402px;top:1582px;width:1478px;height:52px;background:#2a2c30"></div>
<svg style="left:1418px;top:1594px" width="30" height="28" stroke="#888" stroke-width="2"><rect x="1" y="2" width="28" height="24"/><path d="M10 2v24"/><path d="M15 8l9 6-9 6z" fill="#888" stroke="none"/></svg>
<svg style="left:1478px;top:1595px" width="26" height="28" stroke="#999" stroke-width="3"><circle cx="13" cy="14" r="11"/><path d="M6 6l14 16"/></svg>
<div class="a" style="left:1527px;top:1592px;width:1px;height:32px;background:#444"></div>
<div class="t" style="left:1546px;top:1609px;font-size:23.5px;color:#ddd">appservice (#5)</div>
<svg style="left:1788px;top:1602px" width="14" height="12"><path d="M0 0h14L7 12z" fill="#999"/></svg>
<div class="a" style="left:1821px;top:1592px;width:1px;height:32px;background:#444"></div>
<svg style="left:1842px;top:1595px" width="32" height="26"><ellipse cx="16" cy="13" rx="13" ry="11" stroke="#999" stroke-width="4"/><circle cx="16" cy="13" r="4" fill="#999"/></svg>
<div class="a" style="left:1895px;top:1592px;width:1px;height:32px;background:#444"></div>
<div class="a" style="left:1908px;top:1587px;width:312px;height:42px;box-sizing:border-box;border:2px solid #555;background:#262626"></div>
<div class="t" style="left:1918px;top:1609px;font-size:24px;color:#ddd">Filter</div>
<div class="t" style="left:2235px;top:1608px;font-size:24px;color:#ddd">Default levels</div>
<svg style="left:2387px;top:1601px" width="14" height="12"><path d="M0 0h14L7 12z" fill="#999"/></svg>
<div class="a" style="left:2697px;top:1592px;width:1px;height:32px;background:#444"></div>
<div class="t" style="left:2716px;top:1608px;font-size:24px;color:#888">1 hidden</div>
<svg style="left:2833px;top:1595px" width="30" height="30"><circle cx="14" cy="14" r="9" stroke="#999" stroke-width="6"/><path d="M14 0v5M14 23v5M2 7l4 3M22 18l4 3M2 21l4-3M22 10l4-3" stroke="#999" stroke-width="5"/></svg>

<div class="a" style="left:1402px;top:1634px;width:1478px;height:2px;background:#444"></div>
<div class="a" style="left:1402px;top:1636px;width:1478px;height:28px;background:#272727"></div>
<div class="a" style="left:2851px;top:1636px;width:27px;height:28px;background:#333;border:1px solid #555;box-sizing:border-box;border-radius:2px"></div>

<!-- status bars -->
<div class="a" style="left:0;top:1664px;width:1000px;height:56px;background:#383838"></div>
<div class="a" style="left:1002px;top:1664px;width:1878px;height:56px;background:#383838"></div>
<div class="t" style="left:16px;top:1692px;font-size:24px;color:#999">页面路径</div>
<svg style="left:122px;top:1690px" width="12" height="10"><path d="M1 1h10L6 9z" fill="#999"/></svg>
<div class="a" style="left:150px;top:1680px;width:1px;height:24px;background:#666"></div>
<div class="t" style="left:166px;top:1692px;font-size:24px;color:#888">pages/index/index</div>
<svg style="left:376px;top:1682px" width="26" height="28" stroke="#aaa" stroke-width="2"><rect x="5" y="6" width="19" height="21"/><path d="M2 20V2h16"/></svg>
<svg style="left:820px;top:1680px" width="170" height="32" stroke="#888" stroke-width="2">
<ellipse cx="18" cy="16" rx="8" ry="12"/><path d="M10 15h16M18 6v22M8 6l5 4M28 6l-5 4M6 16h4M30 16h-4M7 28l5-4M29 28l-5-4"/>
<ellipse cx="85" cy="15" rx="14" ry="11"/><circle cx="85" cy="15" r="5"/>
<circle cx="139" cy="15" r="1.800" fill="#888" stroke="none"/><circle cx="148" cy="15" r="1.800" fill="#888" stroke="none"/><circle cx="157" cy="15" r="1.800" fill="#888" stroke="none"/>
</svg>
<svg style="left:1032px;top:1676px" width="30" height="34" stroke="#8f8f8f" stroke-width="2"><circle cx="8" cy="5" r="3.500"/><circle cx="8" cy="29" r="3.500"/><circle cx="21" cy="12" r="3.500"/><path d="M8 9v16M9 24c6-2 11-3 12-8"/></svg>
<div class="st" style="left:1067px;color:#8f8f8f">main*</div>
<svg style="left:1160px;top:1680px" width="30" height="28" stroke="#8f8f8f" stroke-width="2"><path d="M5 14c0-6 5-10 10-10 3 0 5 1 7 3M25 14c0 6-5 10-10 10-3 0-5-1-7-3M22 2v6h-6M8 26v-6h6"/></svg>
<svg style="left:1222px;top:1680px" width="26" height="28" stroke="#8f8f8f" stroke-width="2"><ellipse cx="13" cy="14" rx="11" ry="12"/><path d="M8 9l10 10M18 9L8 19"/></svg>
<div class="st" style="left:1253px;color:#8f8f8f">0</div>
<svg style="left:1276px;top:1680px" width="26" height="28" stroke="#8f8f8f" stroke-width="2"><path d="M13 3l11 22H2zM13 11v7M13 20v2"/></svg>
<div class="st" style="left:1309px;color:#8f8f8f">0</div>
<div class="st" style="left:2368px">行 12，列 25</div>
<div class="st" style="left:2538px;letter-spacing:-.2px">空格: 2</div>
<div class="st" style="left:2643px;letter-spacing:-.8px">UTF-8</div>
<div class="st" style="left:2739px">LF</div>
<div class="st" style="left:2793px;letter-spacing:-.3px">WXML</div>

</body>
</html>
